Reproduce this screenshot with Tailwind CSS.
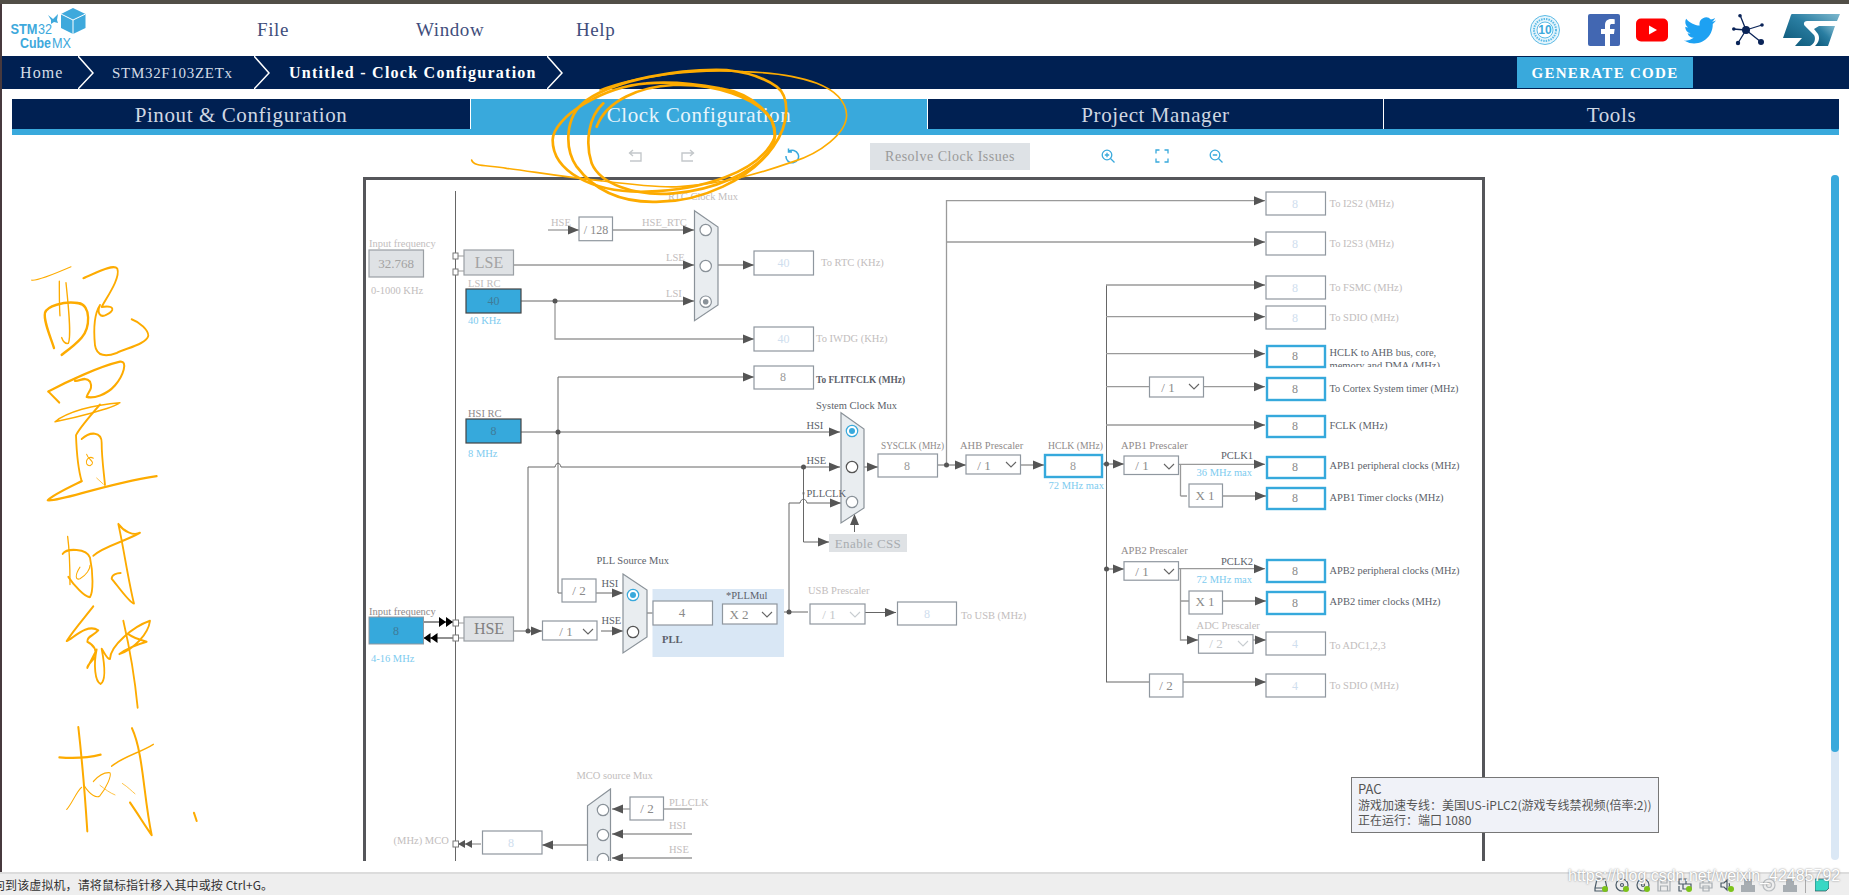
<!DOCTYPE html>
<html lang="en">
<head>
<meta charset="utf-8">
<title>STM32CubeMX Untitled - Clock Configuration</title>
<script src="https://cdn.jsdelivr.net/npm/@tailwindcss/browser@4"></script>
</head>
<body class="relative w-[1849px] h-[895px] overflow-hidden bg-white font-['Liberation_Serif',serif]">
<div class="h-[4px] bg-[#514e47]"></div>
<div class="h-[868px] border-l-2 border-[#47393d] overflow-hidden">
  <!-- header -->
  <header class="h-[52px] flex items-center">
    <svg class="w-[90px] h-[52px] shrink-0" viewBox="2 4 90 52">
      <path d="M73 8 85.500 14v14L73 34 61 28V14z" fill="#3ea9dc"/>
      <path d="M61 14l12 6 12.500-6M73 20v14" stroke="#fff" stroke-width="1" fill="none"/>
      <path d="M48 15l5 4 5-5-1 6 1 3-4-1-3 2 0-4z" fill="#3ea9dc"/>
      <text x="10.500" y="34" font-size="15.500" font-weight="700" fill="#3ea9dc" textLength="27" lengthAdjust="spacingAndGlyphs" font-family="Liberation Sans">STM</text>
      <text x="38" y="34" font-size="15.500" fill="#3ea9dc" textLength="14" lengthAdjust="spacingAndGlyphs" font-family="Liberation Sans">32</text>
      <text x="20" y="47.500" font-size="15.500" font-weight="700" fill="#3ea9dc" textLength="31" lengthAdjust="spacingAndGlyphs" font-family="Liberation Sans">Cube</text>
      <text x="52" y="47.500" font-size="15.500" fill="#3ea9dc" textLength="19" lengthAdjust="spacingAndGlyphs" font-family="Liberation Sans">MX</text>
    </svg>
    <nav class="flex ml-[165px] pt-[1px] text-[19px] tracking-[0.6px] text-[#3f4e7c]">
      <span class="w-[159px]">File</span>
      <span class="w-[160px]">Window</span>
      <span>Help</span>
    </nav>
    <div class="ml-auto flex items-center">
      <svg class="w-[30px] h-[30px] mr-[28px]" viewBox="0 0 30 30">
        <circle cx="15" cy="15" r="14.500" fill="#e6f5fc" stroke="#5dbbe6" stroke-width="1"/>
        <circle cx="15" cy="15" r="11" fill="none" stroke="#5dbbe6" stroke-width="2" stroke-dasharray="1.500 1"/>
        <circle cx="15" cy="15" r="8" fill="#fff" stroke="#5dbbe6"/>
        <text x="15" y="19" text-anchor="middle" font-size="12" font-weight="700" fill="#3ea9dc" font-family="Liberation Sans">10</text>
      </svg>
      <svg class="w-[32px] h-[32px] mr-[16px]" viewBox="0 0 32 32">
        <rect width="32" height="32" rx="2" fill="#4267b2"/>
        <path d="M22 32V20h4l.6-5H22v-3c0-1.400.6-2 2-2h2.700V5.300C26 5.200 24.600 5 23 5c-3.600 0-6 2.200-6 6.200V15h-4v5h4v12z" fill="#fff"/>
      </svg>
      <svg class="w-[32px] h-[24px] mr-[16px]" viewBox="0 0 32 24">
        <rect width="32" height="23" y="0.500" rx="5" fill="#f00"/>
        <path d="M13 7.500l8 4.500-8 4.500z" fill="#fff"/>
      </svg>
      <svg class="w-[32px] h-[27px] mr-[16px]" viewBox="0 0 24 20">
        <path transform="translate(0 -2)" d="M23.953 4.570a10 10 0 01-2.825.775 4.958 4.958 0 002.163-2.723c-.951.555-2.005.959-3.127 1.184a4.920 4.920 0 00-8.384 4.482C7.690 8.095 4.067 6.130 1.640 3.162a4.822 4.822 0 00-.666 2.475c0 1.710.870 3.213 2.188 4.096a4.904 4.904 0 01-2.228-.616v.060a4.923 4.923 0 003.946 4.827 4.996 4.996 0 01-2.212.085 4.936 4.936 0 004.604 3.417 9.867 9.867 0 01-6.102 2.105c-.390 0-.779-.023-1.170-.067a13.995 13.995 0 007.557 2.209c9.053 0 13.998-7.496 13.998-13.985 0-.210 0-.420-.015-.630A9.935 9.935 0 0024 4.590z" fill="#1da1f2"/>
      </svg>
      <svg class="w-[32px] h-[32px] mr-[19px]" viewBox="0 0 32 32">
        <path d="M14 16 8 1M14 16 1 15M14 16 30 11M14 16 29 28M14 16 6 29" stroke="#0a2458" stroke-width="1.300"/>
        <circle cx="14" cy="16" r="4" fill="#0a2458"/><circle cx="8" cy="1.800" r="1.800" fill="#0a2458"/><circle cx="1.800" cy="15" r="1.800" fill="#0a2458"/><circle cx="30" cy="11" r="1.800" fill="#0a2458"/><circle cx="29" cy="28" r="3" fill="#0a2458"/><circle cx="6" cy="29" r="2.200" fill="#0a2458"/>
      </svg>
      <svg class="w-[57px] h-[32px] mr-[9px]" viewBox="0 0 57 32">
        <defs><linearGradient id="st" x1="0" y1="1" x2="1" y2="0"><stop offset="0" stop-color="#0b5575"/><stop offset="0.550" stop-color="#2a7ea2"/><stop offset="1" stop-color="#7db8ce"/></linearGradient></defs>
        <path d="M9 0H57L54 7H24C21 7 20 10 22 12L31 21C33 24 32 30 27 32H12L19 24H0L7 4C8 1 8 0 9 0z" fill="url(#st)"/>
        <path d="M36 12H52L45 32H32C36 28 37 24 35 20L31 15z" fill="url(#st)"/>
      </svg>
    </div>
  </header>
  <!-- breadcrumb -->
  <div class="h-[33px] bg-[#002052] flex items-center pl-[18px] text-[15px] tracking-[0.8px] text-[#d5dde8]">
    <span class="w-[58px] text-[16px] tracking-[1.100px] pt-[1px]">Home</span>
    <svg class="w-[16px] h-[33px] shrink-0" viewBox="0 0 16 33"><path d="M0 0 15 17 0 33" fill="none" stroke="#fff" stroke-width="1.500"/></svg>
    <span class="w-[142px] ml-[18px] pt-[1px] tracking-[0.7px]">STM32F103ZETx</span>
    <svg class="w-[16px] h-[33px] shrink-0" viewBox="0 0 16 33"><path d="M0 0 15 17 0 33" fill="none" stroke="#fff" stroke-width="1.500"/></svg>
    <span class="w-[258px] ml-[19px] pt-[1px] text-white font-bold text-[16px] tracking-[1.250px] whitespace-nowrap">Untitled - Clock Configuration</span>
    <svg class="w-[16px] h-[33px] shrink-0" viewBox="0 0 16 33"><path d="M0 0 15 17 0 33" fill="none" stroke="#fff" stroke-width="1.500"/></svg>
    <button class="ml-auto mr-[156px] w-[176px] h-[31px] pt-[1px] bg-[#39a9dc] text-white font-bold text-[15px] tracking-[1.300px]">GENERATE CODE</button>
  </div>
  <!-- tabs -->
  <div class="mt-[10px] mx-[10px] h-[36px] grid grid-cols-[459px_457px_456px_1fr] grid-rows-[30px] border-b-[6px] border-[#39a9dc] text-[21px] leading-[26px] tracking-[0.6px] text-[#cfd7e3]">
    <div class="bg-[#002052] border-r border-white flex items-center justify-center pt-[2px]">Pinout &amp; Configuration</div>
    <div class="bg-[#39a9dc] border-r border-white flex items-center justify-center pt-[2px] text-[#e8f5fb]">Clock Configuration</div>
    <div class="bg-[#002052] border-r border-white flex items-center justify-center pt-[2px]">Project Manager</div>
    <div class="bg-[#002052] flex items-center justify-center pt-[2px]">Tools</div>
  </div>
  <!-- toolbar -->
  <div class="h-[42px] flex items-center pl-[626px]">
    <svg class="w-[14px] h-[14px]" viewBox="0 0 14 14" fill="none" stroke="#c4c8cb" stroke-width="1.400"><path d="M1 4h12v8H2M5 1 1.500 4 5 7"/></svg>
    <svg class="w-[14px] h-[14px] ml-[39px]" viewBox="0 0 14 14" fill="none" stroke="#c4c8cb" stroke-width="1.400"><path d="M13 4H1v8h11M9 1l3.500 3L9 7"/></svg>
    <svg class="w-[16px] h-[16px] ml-[89px]" viewBox="0 0 16 16" fill="none" stroke="#39a9dc" stroke-width="1.500"><path d="M4.500 3.500A6.300 6.300 0 1 1 2 8M4.500 0.500v3.500H8"/></svg>
    <div class="ml-[70px] w-[160px] h-[27px] bg-[#dee2e6] text-[#9a9a9a] text-[14px] tracking-[0.5px] flex items-center justify-center">Resolve Clock Issues</div>
    <svg class="w-[14px] h-[14px] ml-[71px]" viewBox="0 0 14 14" fill="none" stroke="#39a9dc" stroke-width="1.300"><circle cx="6" cy="6" r="4.800"/><path d="M9.500 9.500 13.500 13.500M3.800 6h4.400M6 3.800v4.400"/></svg>
    <svg class="w-[14px] h-[14px] ml-[40px]" viewBox="0 0 14 14" fill="none" stroke="#39a9dc" stroke-width="1.300"><path d="M1 4.500V1h3.500M9.500 1H13v3.500M13 9.500V13H9.500M4.500 13H1V9.500"/></svg>
    <svg class="w-[14px] h-[14px] ml-[40px]" viewBox="0 0 14 14" fill="none" stroke="#39a9dc" stroke-width="1.300"><circle cx="6" cy="6" r="4.800"/><path d="M9.500 9.500 13.500 13.500M3.800 6h4.400"/></svg>
  </div>
  <!-- clock tree -->
  <svg class="block ml-[361px] w-[1122px] h-[684px]" viewBox="363 177 1122 684" font-size="10.500" fill="#c2bdbd">
    <defs>
      <marker id="a" markerUnits="userSpaceOnUse" markerWidth="11" markerHeight="10" refX="11" refY="5" orient="auto"><path d="M0 0.500 11 5 0 9.500z" fill="#555"/></marker>
      <marker id="k" markerUnits="userSpaceOnUse" markerWidth="14" markerHeight="10" refX="14" refY="5" orient="auto"><path d="M0 0 7 5 0 10zM7 0 14 5 7 10z" fill="#000"/></marker>
      <marker id="d" markerUnits="userSpaceOnUse" markerWidth="14" markerHeight="10" refX="14" refY="5" orient="auto"><path d="M0 1 7 5 0 9zM7 1 14 5 7 9z" fill="#555"/></marker>
    </defs>
    <rect x="364.500" y="178.500" width="1119" height="800" fill="#fff" stroke="#55565a" stroke-width="3"/>
    <!-- power rail -->
    <path d="M455.500 191V861" stroke="#666" fill="none"/>
    <!-- active wires -->
    <g stroke="#666" fill="none">
      <path d="M513 265H694" marker-end="url(#a)"/>
      <path d="M521 301H694" marker-end="url(#a)"/>
      <path d="M718 265H754" marker-end="url(#a)"/>
      <path d="M558 377H754" marker-end="url(#a)"/>
      <path d="M558 377V593H562"/>
      <path d="M521 432H840" marker-end="url(#a)"/>
      <path d="M528 631V467H555C556 462 560 462 561 467H840" marker-end="url(#a)"/>
      <path d="M803.500 467V495C802 491 805 491 803.500 495V542H829" marker-end="url(#a)"/>
      <path d="M789 612V503H800C801 498 806 498 807 503H841" marker-end="url(#a)"/>
      <path d="M854.500 532V514" marker-end="url(#a)"/>
      <path d="M864 467H878" marker-end="url(#a)"/>
      <path d="M596 593H623" marker-end="url(#a)"/>
      <path d="M513 631H542" marker-end="url(#a)"/>
      <path d="M601 631H623" marker-end="url(#a)"/>
      <path d="M647 613H653M712 613H722M777 612H808"/>
      <path d="M865 612.500H896" marker-end="url(#a)"/>
      <path d="M937 465H966" marker-end="url(#a)"/>
      <path d="M1020 465H1044" marker-end="url(#a)"/>
      <path d="M1106.500 285V682"/>
      <path d="M1102 464H1124" marker-end="url(#a)"/>
      <path d="M1106 569H1124" marker-end="url(#a)"/>
      <path d="M1180.500 496H1187M1180.500 601H1189"/>
      <path d="M1222 496H1266" marker-end="url(#a)"/>
      <path d="M1222 601H1266" marker-end="url(#a)"/>
      <path d="M1106 682H1150M1183 682H1266" marker-end="url(#a)"/>
    </g>
    <!-- lighter wires -->
    <g stroke="#9a9a9a" stroke-width="1.300" fill="none">
      <path d="M548 230H579" marker-end="url(#a)"/>
      <path d="M612 230H694" marker-end="url(#a)"/>
      <path d="M555 301V339H754" marker-end="url(#a)"/>
      <path d="M946.500 465V200.700H1265" marker-end="url(#a)"/>
      <path d="M946.500 242H1265" marker-end="url(#a)"/>
      <path d="M1106 285H1265" marker-end="url(#a)"/>
      <path d="M1106 316.700H1265" marker-end="url(#a)"/>
      <path d="M1106 353.700H1265" marker-end="url(#a)"/>
      <path d="M1106 386.700H1150M1203 386.700H1265" marker-end="url(#a)"/>
      <path d="M1106 425H1265" marker-end="url(#a)"/>
      <path d="M1178 464.300H1265" marker-end="url(#a)"/>
      <path d="M1180.500 464V496"/>
      <path d="M1178 568.700H1265" marker-end="url(#a)"/>
      <path d="M1180.500 569V640H1198" marker-end="url(#a)"/>
      <path d="M1253 640H1266" marker-end="url(#a)"/>
      <path d="M663 809H692"/>
      <path d="M630 809H612" marker-end="url(#a)"/>
      <path d="M692 834H612" marker-end="url(#a)"/>
      <path d="M692 858H612" marker-end="url(#a)"/>
      <path d="M588 845H542" marker-end="url(#a)"/>
      <path d="M481 844H458" marker-end="url(#d)"/>
    </g>
    <!-- hse connection -->
    <path d="M423.500 622H453" stroke="#222" fill="none" marker-end="url(#k)"/>
    <path d="M453 638H423.500" stroke="#222" fill="none" marker-end="url(#k)"/>
    <path d="M458 623H464M458 638H464M458 256H464M458 271H464" stroke="#999" fill="none"/>
    <g fill="#fff" stroke="#777"><rect x="453" y="253" width="5" height="6"/><rect x="453" y="269" width="5" height="6"/><rect x="453" y="620" width="5.500" height="6"/><rect x="453" y="635" width="5.500" height="6"/><rect x="453" y="841" width="5.500" height="6"/></g>
    <!-- junction dots -->
    <g fill="#555"><circle cx="555" cy="301" r="2.500"/><circle cx="558" cy="432" r="2.500"/><circle cx="803.500" cy="467" r="2.500"/><circle cx="528" cy="631" r="2.500"/><circle cx="789" cy="612" r="2.500"/><circle cx="946.500" cy="465" r="2.500"/><circle cx="1106.500" cy="464" r="2.500"/><circle cx="1106.500" cy="569" r="2.500"/></g>
    <!-- PLL group -->
    <rect x="652.500" y="589" width="131.500" height="68" fill="#d9e7f5"/>
    <!-- multiplexers -->
    <g fill="#e9edf0" stroke="#8a9299" stroke-width="1.200">
      <path d="M694.500 210.700 718 227V305L694.500 320.700z"/>
      <path d="M841 412.700 864 429V508L841 523z"/>
      <path d="M623 574 647 590V637L623 653z"/>
      <path d="M610.500 789 587.500 805.700V870H610.500z"/>
    </g>
    <g fill="#fff" stroke="#8a9299" stroke-width="1.200">
      <circle cx="705.700" cy="230" r="5.700"/><circle cx="705.700" cy="266" r="5.700"/><circle cx="705.700" cy="301.700" r="5.700"/>
      <circle cx="852" cy="502" r="5.700"/>
      <circle cx="603" cy="810" r="5.700"/><circle cx="603" cy="835" r="5.700"/><circle cx="603" cy="859" r="5.700"/>
    </g>
    <circle cx="705.700" cy="301.700" r="2.800" fill="#8a9299"/>
    <g fill="#fff" stroke="#555" stroke-width="1.200"><circle cx="852" cy="467" r="5.700"/><circle cx="633" cy="632" r="5.700"/></g>
    <g fill="#fff" stroke="#39a9dc" stroke-width="1.200"><circle cx="852" cy="431" r="5.700"/><circle cx="633" cy="595" r="5.700"/></g>
    <g fill="#39a9dc"><circle cx="852" cy="431" r="3"/><circle cx="633" cy="595" r="3"/></g>
    <!-- white boxes -->
    <g fill="#fff" stroke="#8f979f" stroke-width="1.200">
      <rect x="579" y="217" width="33.500" height="23.700"/>
      <rect x="754" y="251" width="59.500" height="24"/>
      <rect x="754" y="327" width="59.500" height="24"/>
      <rect x="754" y="366" width="59.500" height="23"/>
      <rect x="878" y="454" width="59.500" height="23"/>
      <rect x="562" y="579" width="34" height="23"/>
      <rect x="542.500" y="621" width="54.500" height="19"/>
      <rect x="653" y="601" width="59.500" height="24"/>
      <rect x="722.500" y="604" width="54.500" height="20"/>
      <rect x="810" y="604" width="55" height="20"/>
      <rect x="897.500" y="602" width="59" height="23"/>
      <rect x="630" y="797" width="33.500" height="23"/>
      <rect x="482.500" y="831" width="59.500" height="23"/>
      <rect x="966" y="455" width="54.500" height="19"/>
      <rect x="1124" y="456" width="54.500" height="18.500"/>
      <rect x="1124" y="561.700" width="54.500" height="18.500"/>
      <rect x="1198.500" y="634.700" width="54.500" height="18.500"/>
      <rect x="1149.500" y="377" width="54" height="20"/>
      <rect x="1189" y="484" width="33.500" height="23"/>
      <rect x="1189" y="591" width="33.500" height="23"/>
      <rect x="1149.500" y="674" width="33.500" height="23"/>
      <rect x="1266" y="192" width="59.500" height="23"/>
      <rect x="1266" y="232" width="59.500" height="23"/>
      <rect x="1266" y="276" width="59.500" height="23"/>
      <rect x="1266" y="306" width="59.500" height="23"/>
      <rect x="1266" y="632" width="59.500" height="23"/>
      <rect x="1266" y="674" width="59.500" height="23"/>
    </g>
    <!-- gray boxes -->
    <g fill="#dfe2e5" stroke="#9a9fa4" stroke-width="1.200">
      <rect x="369" y="250" width="54.500" height="27"/>
      <rect x="464" y="250" width="49.500" height="25"/>
      <rect x="464" y="617" width="49.500" height="24"/>
    </g>
    <rect x="829" y="534" width="78" height="18" fill="#dfe2e5"/>
    <!-- blue inputs -->
    <g fill="#36a9dc" stroke="#444" stroke-width="1.200"><rect x="466" y="289" width="55" height="24"/><rect x="466" y="419" width="55" height="24"/></g>
    <rect x="369" y="617" width="54.500" height="27" fill="#36a9dc" stroke="#8f979f" stroke-width="1"/>
    <!-- selected outputs -->
    <g fill="#fff" stroke="#36a9dc" stroke-width="2.400">
      <rect x="1045" y="455" width="57" height="22"/>
      <rect x="1267" y="346" width="58" height="21"/>
      <rect x="1267" y="378" width="58" height="22"/>
      <rect x="1267" y="416" width="58" height="21"/>
      <rect x="1267" y="457" width="58" height="21"/>
      <rect x="1267" y="488" width="58" height="21"/>
      <rect x="1267" y="560" width="58" height="22"/>
      <rect x="1267" y="592" width="58" height="22"/>
    </g>
    <!-- select chevrons -->
    <g fill="none" stroke="#666" stroke-width="1.100">
      <path d="M583 629l5 5 5-5M762 612l5 5 5-5M1006 462l5 5 5-5M1164 464l5 5 5-5M1164 569l5 5 5-5M1189 384l5 5 5-5"/>
    </g>
    <g fill="none" stroke="#c8cdd1" stroke-width="1.100"><path d="M850 612l5 5 5-5M1238 641l5 5 5-5"/></g>
    <!-- light labels -->
    <g>
      <text x="369" y="246.500">Input frequency</text>
      <text x="371" y="293.500">0-1000 KHz</text>
      <text x="468" y="286.500">LSI RC</text>
      <text x="551" y="225.500">HSE</text>
      <text x="642" y="225.500">HSE_RTC</text>
      <text x="666" y="260.500">LSE</text>
      <text x="666" y="296.500">LSI</text>
      <text x="821" y="265.500">To RTC (KHz)</text>
      <text x="816" y="341.500">To IWDG (KHz)</text>
      <text x="668" y="200">RTC Clock Mux</text>
      <text x="808" y="593.500">USB Prescaler</text>
      <text x="961" y="618.500">To USB (MHz)</text>
      <text x="1329.500" y="206.500">To I2S2 (MHz)</text>
      <text x="1329.500" y="246.500">To I2S3 (MHz)</text>
      <text x="1329.500" y="290.500">To FSMC (MHz)</text>
      <text x="1329.500" y="320.500">To SDIO (MHz)</text>
      <text x="1329.500" y="648.500">To ADC1,2,3</text>
      <text x="1329.500" y="688.500">To SDIO (MHz)</text>
      <text x="1196.600" y="629">ADC Prescaler</text>
      <text x="576.400" y="778.500">MCO source Mux</text>
      <text x="669" y="805.500">PLLCLK</text>
      <text x="669" y="828.500">HSI</text>
      <text x="669" y="852.500">HSE</text>
      <text x="393.600" y="843.500">(MHz) MCO</text>
    </g>
    <!-- medium labels -->
    <g fill="#8f8a8a">
      <text x="369" y="614.500">Input frequency</text>
      <text x="468" y="416.500">HSI RC</text>
      <text x="881" y="449" textLength="63" lengthAdjust="spacingAndGlyphs">SYSCLK (MHz)</text>
      <text x="960" y="449">AHB Prescaler</text>
      <text x="1048" y="449" textLength="55" lengthAdjust="spacingAndGlyphs">HCLK (MHz)</text>
      <text x="1121" y="449">APB1 Prescaler</text>
      <text x="1121" y="553.500">APB2 Prescaler</text>
    </g>
    <!-- dark labels -->
    <g fill="#5c5f6a">
      <text x="816" y="382.500" font-weight="700" textLength="89" lengthAdjust="spacingAndGlyphs">To FLITFCLK (MHz)</text>
      <text x="816" y="408.500">System Clock Mux</text>
      <text x="806.400" y="428.500">HSI</text>
      <text x="806.400" y="463.500">HSE</text>
      <text x="806.400" y="496.500">PLLCLK</text>
      <text x="596.400" y="563.500">PLL Source Mux</text>
      <text x="601.400" y="586.500">HSI</text>
      <text x="601.400" y="623.500">HSE</text>
      <text x="726" y="598.500">*PLLMul</text>
      <text x="662" y="642.500" font-weight="700">PLL</text>
      <text x="1221" y="459">PCLK1</text>
      <text x="1221" y="565">PCLK2</text>
      <text x="1329.500" y="355.500">HCLK to AHB bus, core,</text>
      <text x="1329.500" y="391.500" textLength="129" lengthAdjust="spacingAndGlyphs">To Cortex System timer (MHz)</text>
      <text x="1329.500" y="428.500">FCLK (MHz)</text>
      <text x="1329.500" y="468.500" textLength="130" lengthAdjust="spacingAndGlyphs">APB1 peripheral clocks (MHz)</text>
      <text x="1329.500" y="500.500">APB1 Timer clocks (MHz)</text>
      <text x="1329.500" y="573.500" textLength="130" lengthAdjust="spacingAndGlyphs">APB2 peripheral clocks (MHz)</text>
      <text x="1329.500" y="604.500">APB2 timer clocks (MHz)</text>
      <svg x="1329" y="358" width="120" height="9"><text x="0.500" y="10.500">memory and DMA (MHz)</text></svg>
    </g>
    <!-- blue notes -->
    <g fill="#7ecbef">
      <text x="468" y="323.500">40 KHz</text>
      <text x="468" y="456.500">8 MHz</text>
      <text x="371" y="661.500">4-16 MHz</text>
      <text x="1048.500" y="489">72 MHz max</text>
      <text x="1196.600" y="476">36 MHz max</text>
      <text x="1196.600" y="583">72 MHz max</text>
    </g>
    <!-- box values -->
    <g font-size="13" text-anchor="middle" fill="#a3a3a3">
      <text x="396" y="268">32.768</text>
      <text x="489" y="268" font-size="16">LSE</text>
      <text x="489" y="634" font-size="16" fill="#7f7f7f">HSE</text>
      <text x="868" y="548" fill="#a8acb0" font-size="13" letter-spacing="0.400">Enable CSS</text>
      <text x="596" y="234" fill="#8a8a8a" font-size="12">/ 128</text>
      <text x="566" y="636" fill="#8a8a8a">/ 1</text>
      <text x="579" y="595" fill="#8a8a8a">/ 2</text>
      <text x="682" y="617" fill="#8a8a8a">4</text>
      <text x="739" y="619" fill="#8a8a8a">X 2</text>
      <text x="783" y="381" fill="#9a9a9a" font-size="12">8</text>
      <text x="907" y="470" fill="#9a9a9a" font-size="12">8</text>
      <text x="1073" y="470" fill="#9a9a9a" font-size="12">8</text>
      <text x="984" y="470" fill="#8a8a8a">/ 1</text>
      <text x="1142" y="470" fill="#8a8a8a">/ 1</text>
      <text x="1142" y="576" fill="#8a8a8a">/ 1</text>
      <text x="1168" y="392" fill="#8a8a8a">/ 1</text>
      <text x="1205" y="500" fill="#8a8a8a">X 1</text>
      <text x="1205" y="606" fill="#8a8a8a">X 1</text>
      <text x="1166" y="690" fill="#8a8a8a">/ 2</text>
      <text x="647" y="813" fill="#8a8a8a">/ 2</text>
      <text x="829" y="619" fill="#c4c8cb">/ 1</text>
      <text x="1216" y="648" fill="#c4c8cb">/ 2</text>
      <text x="493.500" y="305" fill="#3f7c99" font-size="12">40</text>
      <text x="493.500" y="435" fill="#3f7c99" font-size="12">8</text>
      <text x="396" y="635" fill="#3f7c99" font-size="12">8</text>
    </g>
    <g font-size="12" text-anchor="middle" fill="#cfdeee">
      <text x="783.500" y="267">40</text>
      <text x="783.500" y="343">40</text>
      <text x="927" y="618">8</text>
      <text x="511" y="847">8</text>
      <text x="1295" y="208">8</text>
      <text x="1295" y="248">8</text>
      <text x="1295" y="292">8</text>
      <text x="1295" y="322">8</text>
      <text x="1295" y="648">4</text>
      <text x="1295" y="690">4</text>
    </g>
    <g font-size="12" text-anchor="middle" fill="#8a8a8a">
      <text x="1295" y="360">8</text>
      <text x="1295" y="393">8</text>
      <text x="1295" y="430">8</text>
      <text x="1295" y="471">8</text>
      <text x="1295" y="502">8</text>
      <text x="1295" y="575">8</text>
      <text x="1295" y="607">8</text>
    </g>
  </svg>
</div>
<!-- VM status bar -->
<footer class="h-[23px] border-t-2 border-[#dcdcdc] bg-[#eeeeee] flex items-center overflow-hidden">
  <span class="ml-[-7px] text-[12px] tracking-[0.1px] text-[#333] font-['Noto_Sans_CJK_SC',sans-serif] whitespace-nowrap">向到该虚拟机，请将鼠标指针移入其中或按 Ctrl+G。</span>
  <div class="ml-auto mr-[20px] flex items-center gap-[7px]">
    <svg class="w-[14px] h-[14px]" viewBox="0 0 14 14" fill="none" stroke="#4a5a66" stroke-width="1.200"><path d="M3 1h8l2 9v3H1v-3zM1 10h12"/><circle cx="11" cy="11" r="3" fill="#7cc21a" stroke="none"/></svg>
    <svg class="w-[14px] h-[14px]" viewBox="0 0 14 14" fill="none" stroke="#4a5a66" stroke-width="1.200"><circle cx="7" cy="7" r="6"/><circle cx="7" cy="7" r="1.500"/><circle cx="11" cy="11" r="3" fill="#7cc21a" stroke="none"/></svg>
    <svg class="w-[14px] h-[14px]" viewBox="0 0 14 14" fill="none" stroke="#4a5a66" stroke-width="1.200"><circle cx="7" cy="7" r="6"/><circle cx="7" cy="7" r="1.500"/><circle cx="11" cy="11" r="3" fill="#7cc21a" stroke="none"/></svg>
    <svg class="w-[14px] h-[14px]" viewBox="0 0 14 14" fill="none" stroke="#a7adb2" stroke-width="1.200"><path d="M1 1h12v12H1zM4 1v4h6V1M3.500 13V8h7v5"/></svg>
    <svg class="w-[14px] h-[14px]" viewBox="0 0 14 14" fill="none" stroke="#4a5a66" stroke-width="1.200"><path d="M1 1h7v5H1zM5 6h8v5H5zM1 8v5h3"/><circle cx="11" cy="11" r="3" fill="#7cc21a" stroke="none"/></svg>
    <svg class="w-[14px] h-[14px]" viewBox="0 0 14 14" fill="none" stroke="#a7adb2" stroke-width="1.200"><path d="M4 5V1h6v4M1 5h12v5H1zM4 8h6v5H4z"/></svg>
    <svg class="w-[14px] h-[14px]" viewBox="0 0 14 14" fill="none" stroke="#4a5a66" stroke-width="1.200"><path d="M1 5h3l3-3v10l-3-3H1zM9 5q1 2 0 4"/><circle cx="11" cy="11" r="3" fill="#7cc21a" stroke="none"/></svg>
    <svg class="w-[14px] h-[14px]" viewBox="0 0 14 14"><path d="M3 1h8v6h3v7H0V7h3z" fill="#a7adb2"/></svg>
    <svg class="w-[14px] h-[14px]" viewBox="0 0 14 14" fill="none" stroke="#b9bdc0" stroke-width="1.200"><circle cx="7" cy="7" r="6"/><circle cx="7" cy="7" r="2.500"/></svg>
    <svg class="w-[14px] h-[14px]" viewBox="0 0 14 14"><path d="M3 1h8v6h3v7H0V7h3z" fill="#a7adb2"/></svg>
    <span class="w-px h-[16px] bg-[#aaa] ml-[1px]"></span>
    <svg class="w-[14px] h-[14px] ml-[2px]" viewBox="0 0 14 14"><path d="M0 1h14v9l-3 3H0z" fill="#38d8c4" stroke="#2a4a50" stroke-width="0.700"/></svg>
  </div>
</footer>
<!-- overlay: watermark -->
<div class="absolute left-[1568px] top-[867px] text-[16px] leading-[18px] text-white font-['Liberation_Sans',sans-serif] [text-shadow:0_0_2px_#777] whitespace-nowrap">https://blog.csdn.net/weixin_42485792</div>
<!-- overlay: scrollbar -->
<div class="absolute left-[1831px] top-[175px] w-[8px] h-[685px] rounded-full bg-[#dbe8f5]">
  <div class="w-[8px] h-[577px] rounded-full bg-[#39a9dc]"></div>
</div>
<!-- overlay: PAC tooltip -->
<div class="absolute left-[1351px] top-[777px] w-[308px] h-[56px] border border-[#777] bg-[#f0f2f8] pl-[6px] pt-[3px] text-[12px] leading-[15.700px] text-[#555] font-['Noto_Sans_CJK_SC',sans-serif] whitespace-nowrap">
  <div class="text-[13px]">PAC</div>
  <div>游戏加速专线：美国US-iPLC2(游戏专线禁视频(倍率:2))</div>
  <div>正在运行：端口 1080</div>
</div>
<!-- overlay: handwriting -->
<svg class="absolute left-0 top-0 w-[1849px] h-[895px] pointer-events-none" viewBox="0 0 1849 895" fill="none" stroke="#fdab00" stroke-linecap="round" stroke-linejoin="round">
  <g transform="translate(460 60) scale(0.3333)" stroke-width="8">
    <path stroke-width="5" d="M35 300C40 320 80 315 140 325C220 335 300 350 420 362C500 372 600 385 660 380C800 370 900 340 1000 305C1080 280 1160 220 1160 165C1155 80 1030 40 850 35C700 25 520 50 420 90"/>
    <path d="M560 70C430 80 280 170 278 240C278 330 390 400 560 395C720 390 900 340 945 230C950 170 880 100 780 85C700 70 620 65 560 70"/>
    <path d="M800 30C650 25 470 60 380 120C310 170 315 270 350 320C410 400 500 430 600 425C720 425 870 360 940 260C990 190 990 110 950 80C900 45 850 35 800 30"/>
    <path d="M410 200C440 120 540 80 640 75C760 70 890 110 935 180C950 220 945 250 930 270C880 340 760 390 640 400C520 410 420 370 395 310C375 250 385 170 430 130"/>
  </g>
  <g transform="translate(0 240) scale(0.3333 0.3827)" stroke-width="5.500">
    <path stroke-width="3" d="M95 105C110 108 160 90 213 70"/>
    <path stroke-width="4" d="M178 108C178 150 178 180 180 198"/>
    <path stroke-width="4" d="M198 112C205 170 215 250 205 270C195 272 188 262 185 255"/>
    <path stroke-width="7" d="M162 282C150 250 130 210 135 190C140 175 190 158 235 165C275 170 270 230 245 255C225 275 200 290 185 300"/>
    <path d="M250 100C280 90 340 60 352 75C362 100 320 150 305 175C345 170 345 185 320 195C300 205 290 190 300 170C285 190 280 230 285 275C290 305 320 305 350 295C390 280 440 270 445 250C445 235 420 215 395 207"/>
    <path stroke-width="6" d="M145 396C200 370 300 330 360 318C385 315 370 355 345 380C320 405 280 415 260 410C265 395 280 390 270 370C255 355 240 370 225 368"/>
    <path d="M145 396L178 425"/>
    <path stroke-width="4" d="M165 475C200 450 280 430 360 425C340 440 220 465 165 475"/>
    <path d="M300 430C270 460 240 490 228 510C230 560 235 600 245 630"/>
    <path d="M245 520C270 500 305 500 305 530C305 570 312 610 315 640"/>
    <path stroke-width="3" d="M260 560C265 575 290 580 270 590C250 590 260 560 280 570"/>
    <path stroke-width="6" d="M245 630C210 645 160 665 143 680C180 685 300 640 470 617"/>
    <path stroke-width="2" d="M290 622L310 638"/>
    <path stroke-width="4" d="M203 775C210 820 210 870 210 900"/>
    <path d="M188 820C200 805 260 805 270 830C280 870 280 920 270 933C255 935 220 900 205 880"/>
    <path stroke-width="3" d="M240 855C225 875 225 890 240 885C260 875 270 860 270 850"/>
    <path d="M280 825C310 800 370 790 420 765C400 775 370 760 355 742C370 800 385 890 402 950C390 950 350 900 335 885C335 875 350 870 362 870"/>
    <path d="M280 957C260 980 220 1020 200 1048C215 1045 260 1000 295 1020C280 1035 260 1035 262 1050C285 1060 290 1075 285 1090C270 1105 260 1115 262 1118L290 1070C280 1110 285 1155 302 1160C320 1150 312 1100 305 1068C315 1080 320 1095 330 1095C330 1060 400 1010 450 995C445 1030 400 1070 358 1082C385 1065 420 1055 440 1050C420 1045 400 1040 385 1030"/>
    <path d="M370 995C390 1070 405 1150 413 1222"/>
    <path stroke-width="6" d="M235 1273C245 1350 255 1450 262 1545"/>
    <path stroke-width="6" d="M178 1352C220 1355 270 1352 302 1345"/>
    <path stroke-width="3" d="M245 1430C230 1440 215 1475 200 1488"/>
    <path stroke-width="3" d="M252 1425C270 1450 290 1460 300 1452C320 1430 335 1400 330 1392C310 1390 290 1405 280 1415"/>
    <path stroke-width="2" d="M300 1425C315 1435 330 1445 345 1450"/>
    <path stroke-width="4" d="M335 1375C370 1350 420 1340 460 1318"/>
    <path stroke-width="6" d="M396 1276C430 1340 430 1450 455 1555C435 1530 410 1495 390 1470"/>
    <path stroke-width="2" d="M367 1420C385 1430 395 1440 405 1447"/>
    <path stroke-width="6" d="M582 1497L590 1518"/>
  </g>
</svg>
</body>
</html>
